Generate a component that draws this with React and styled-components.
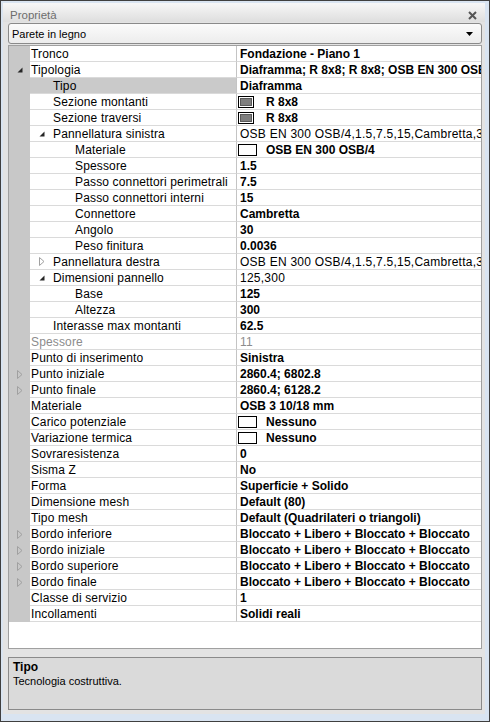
import React from "react";
import styled, { createGlobalStyle } from "styled-components";

const GlobalStyle = createGlobalStyle`
  html, body {
    margin: 0;
    padding: 0;
    background: #ffffff;
  }
  body {
    font-family: "Liberation Sans", Arial, sans-serif;
    font-size: 11px;
    color: #000;
  }
`;

const Window = styled.div`
  width: 490px;
  height: 722px;
  box-sizing: border-box;
  border: 1px solid #3f3f3f;
  background: #d9e4f1;
  padding: 2px 4px 7px 2px;
  display: flex;
`;

const Panel = styled.div`
  width: 482px;
  flex: none;
  background: #e3e3e3;
  display: flex;
  flex-direction: column;
`;

const TitleBar = styled.div`
  height: 20px;
  box-sizing: border-box;
  display: flex;
  align-items: center;
  justify-content: space-between;
  padding: 5px 8px 0 7px;
  background: linear-gradient(#f7f7f7, #dedede);
  color: #6d6d6d;
  font-size: 11.5px;
`;

const Body = styled.div`
  flex: 1;
  display: flex;
  flex-direction: column;
  padding: 1px 3px 4px 5px;
`;

const Dropdown = styled.div`
  height: 21px;
  box-sizing: border-box;
  border: 1px solid #8a8a8a;
  border-radius: 3px;
  background: linear-gradient(#fbfbfb, #ececec);
  display: flex;
  align-items: center;
  justify-content: space-between;
  padding: 0 8px 0 3px;
  font-size: 11px;
`;

const Grid = styled.div`
  margin-top: 1px;
  width: 474px;
  height: 604px;
  box-sizing: border-box;
  border: 1px solid #a0a0a0;
  background: #ffffff;
  overflow: hidden;
`;

const Row = styled.div`
  display: flex;
  height: 16px;
  font-size: 12px;
`;

const Gutter = styled.div`
  width: 21px;
  flex: none;
  background: #c8c8c8;
  display: flex;
  align-items: center;
  padding-left: 8px;
  box-sizing: border-box;
`;

const LabelCell = styled.div`
  width: 207px;
  flex: none;
  box-sizing: border-box;
  border-bottom: 1px solid #dadada;
  border-right: 1px solid #c4c4c4;
  background: ${(p) => (p.$selected ? "#cacaca" : "#ffffff")};
  color: ${(p) => (p.$disabled ? "#8c8c8c" : "#000")};
  display: flex;
  align-items: center;
  padding-left: ${(p) => (p.$level ? p.$level * 22 - 13 : 1)}px;
  letter-spacing: 0.15px;
  white-space: nowrap;
  overflow: hidden;
`;

const ToggleSlot = styled.span`
  width: 14px;
  flex: none;
  display: flex;
  align-items: center;
`;

const ValueCell = styled.div`
  flex: 1;
  min-width: 0;
  box-sizing: border-box;
  border-bottom: 1px solid #dadada;
  display: flex;
  align-items: center;
  padding-left: 3px;
  font-weight: ${(p) => (p.$bold ? 700 : 400)};
  letter-spacing: ${(p) => (p.$bold ? 0 : 0.25)}px;
  color: ${(p) => (p.$disabled ? "#8c8c8c" : "#000")};
  white-space: nowrap;
  overflow: hidden;
`;

const SwatchSlot = styled.span`
  width: 20px;
  margin-left: -2px;
  margin-right: 8px;
  flex: none;
  display: flex;
  align-items: center;
`;

const Swatch = styled.span`
  box-sizing: border-box;
  height: 12px;
  width: ${(p) => (p.$filled ? 16 : 19)}px;
  border: 1px solid #000;
  background: #fff;
  padding: 1px;
  display: flex;
`;

const SwatchFill = styled.span`
  flex: 1;
  background: #7f7f7f;
  border: 1px solid #5a5a5a;
`;

const Spacer = styled.div`
  height: 8px;
  flex: none;
`;

const Description = styled.div`
  width: 474px;
  height: 53px;
  box-sizing: border-box;
  border: 1px solid #8a8a8a;
  background: #dadada;
  padding: 3px 4px;
`;

const DescTitle = styled.div`
  font-weight: 700;
  font-size: 12px;
  line-height: 13px;
`;

const DescText = styled.div`
  font-size: 11px;
  line-height: 14px;
`;

const Expander = ({ open }) =>
  open ? (
    <svg width="6" height="6" viewBox="0 0 6 6">
      <path d="M5.5 0.5 L5.5 5.5 L0.5 5.5 Z" fill="#262626" />
    </svg>
  ) : (
    <svg width="6" height="9" viewBox="0 0 6 9">
      <path d="M0.5 0.5 L5 4.5 L0.5 8.5 Z" fill="none" stroke="#a0a0a0" />
    </svg>
  );

const CloseIcon = () => (
  <svg width="9" height="9" viewBox="0 0 9 9">
    <path d="M1 1 L8 8 M8 1 L1 8" stroke="#555" strokeWidth="2" />
  </svg>
);

const ArrowDown = () => (
  <svg width="7" height="4" viewBox="0 0 7 4">
    <path d="M0 0 L7 0 L3.5 4 Z" fill="#000" />
  </svg>
);

const osb = "OSB EN 300 OSB/4,1.5,7.5,15,Cambretta,30,0.0036";
const bordo = "Bloccato + Libero + Bloccato + Bloccato";

const rows = [
  { label: "Tronco", value: "Fondazione - Piano 1" },
  { label: "Tipologia", value: "Diaframma; R 8x8; R 8x8; OSB EN 300 OSB/4,1.5,7.5,15,Cambretta,30,0.0036", toggle: "open" },
  { label: "Tipo", level: 1, value: "Diaframma", selected: true },
  { label: "Sezione montanti", level: 1, value: "R 8x8", swatch: "filled" },
  { label: "Sezione traversi", level: 1, value: "R 8x8", swatch: "filled" },
  { label: "Pannellatura sinistra", level: 1, value: osb, toggle: "open", regular: true },
  { label: "Materiale", level: 2, value: "OSB EN 300 OSB/4", swatch: "empty" },
  { label: "Spessore", level: 2, value: "1.5" },
  { label: "Passo connettori perimetrali", level: 2, value: "7.5" },
  { label: "Passo connettori interni", level: 2, value: "15" },
  { label: "Connettore", level: 2, value: "Cambretta" },
  { label: "Angolo", level: 2, value: "30" },
  { label: "Peso finitura", level: 2, value: "0.0036" },
  { label: "Pannellatura destra", level: 1, value: osb, toggle: "closed", regular: true },
  { label: "Dimensioni pannello", level: 1, value: "125,300", toggle: "open", regular: true },
  { label: "Base", level: 2, value: "125" },
  { label: "Altezza", level: 2, value: "300" },
  { label: "Interasse max montanti", level: 1, value: "62.5" },
  { label: "Spessore", value: "11", disabled: true },
  { label: "Punto di inserimento", value: "Sinistra" },
  { label: "Punto iniziale", value: "2860.4; 6802.8", toggle: "closed" },
  { label: "Punto finale", value: "2860.4; 6128.2", toggle: "closed" },
  { label: "Materiale", value: "OSB 3 10/18 mm" },
  { label: "Carico potenziale", value: "Nessuno", swatch: "empty" },
  { label: "Variazione termica", value: "Nessuno", swatch: "empty" },
  { label: "Sovraresistenza", value: "0" },
  { label: "Sisma Z", value: "No" },
  { label: "Forma", value: "Superficie + Solido" },
  { label: "Dimensione mesh", value: "Default (80)" },
  { label: "Tipo mesh", value: "Default (Quadrilateri o triangoli)" },
  { label: "Bordo inferiore", value: bordo, toggle: "closed" },
  { label: "Bordo iniziale", value: bordo, toggle: "closed" },
  { label: "Bordo superiore", value: bordo, toggle: "closed" },
  { label: "Bordo finale", value: bordo, toggle: "closed" },
  { label: "Classe di servizio", value: "1" },
  { label: "Incollamenti", value: "Solidi reali" },
];

const PropertyRow = ({ row }) => {
  const level = row.level || 0;
  const toggle = row.toggle ? <Expander open={row.toggle === "open"} /> : null;
  return (
    <Row>
      <Gutter>{level === 0 && toggle}</Gutter>
      <LabelCell $level={level} $selected={row.selected} $disabled={row.disabled}>
        {level > 0 && <ToggleSlot>{toggle}</ToggleSlot>}
        {row.label}
      </LabelCell>
      <ValueCell $bold={!row.disabled && !row.regular} $disabled={row.disabled}>
        {row.swatch && (
          <SwatchSlot>
            <Swatch $filled={row.swatch === "filled"}>
              {row.swatch === "filled" && <SwatchFill />}
            </Swatch>
          </SwatchSlot>
        )}
        {row.value}
      </ValueCell>
    </Row>
  );
};

export default function App() {
  return (
    <>
      <GlobalStyle />
      <Window>
        <Panel>
          <TitleBar>
            <span>Proprietà</span>
            <CloseIcon />
          </TitleBar>
          <Body>
            <Dropdown>
              <span>Parete in legno</span>
              <ArrowDown />
            </Dropdown>
            <Grid>
              {rows.map((row, i) => (
                <PropertyRow key={i} row={row} />
              ))}
            </Grid>
            <Spacer />
            <Description>
              <DescTitle>Tipo</DescTitle>
              <DescText>Tecnologia costruttiva.</DescText>
            </Description>
          </Body>
        </Panel>
      </Window>
    </>
  );
}
